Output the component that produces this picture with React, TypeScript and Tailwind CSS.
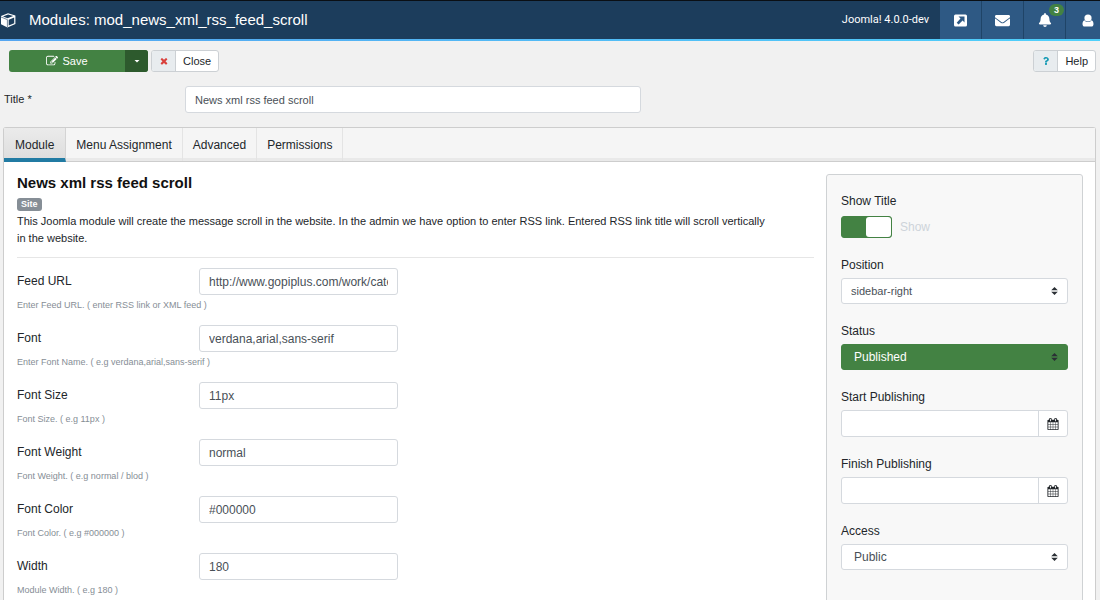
import React, { useState } from "react";
import { FaEnvelope, FaBell, FaQuestion } from "react-icons/fa";

type IconProps = { className?: string };

const CubeIcon = ({ className }: IconProps) => (
  <svg viewBox="0 0 16 16" className={className} aria-hidden="true">
    <path fill="currentColor" d="M8 1.2 15.4 3.6V12L7.4 15.4 1 12.2V4Z" />
    <path fill="#1c3d5c" d="M8.1 2.5 13.2 4.1 7.6 6.3 3 4.5Z" />
    <path fill="#1c3d5c" d="M8.7 7.7 14.2 5.4V11.3L8.7 13.6Z" />
    <path fill="none" stroke="#1c3d5c" strokeWidth="0.6" d="M1 5 7.4 7.6V15" />
  </svg>
);

const EditIcon = ({ className }: IconProps) => (
  <svg viewBox="0 0 1792 1792" fill="currentColor" className={className} aria-hidden="true">
    <path d="M888 1184l116-116-152-152-116 116v56h96v96h56zm440-720q-16-16-33 1l-350 350q-17 17-1 33t33-1l350-350q17-17 1-33zm80 594v190q0 119-84.5 203.5t-203.5 84.5h-832q-119 0-203.5-84.5t-84.5-203.5v-832q0-119 84.5-203.5t203.5-84.5h832q63 0 117 25 15 7 18 23 3 17-9 29l-49 49q-14 14-32 8-23-6-45-6h-832q-66 0-113 47t-47 113v832q0 66 47 113t113 47h832q66 0 113-47t47-113v-126q0-13 9-22l64-64q15-15 35-7t20 29zm-96-738l288 288-672 672h-288v-288zm444 132l-92 92-288-288 92-92q28-28 68-28t68 28l152 152q28 28 28 68t-28 68z" />
  </svg>
);

const CloseIcon = ({ className }: IconProps) => (
  <svg viewBox="0 0 1792 1792" fill="currentColor" className={className} aria-hidden="true">
    <path d="M1490 1322q0 40-28 68l-136 136q-28 28-68 28t-68-28l-294-294-294 294q-28 28-68 28t-68-28l-136-136q-28-28-28-68t28-68l294-294-294-294q-28-28-28-68t28-68l136-136q28-28 68-28t68 28l294 294 294-294q28-28 68-28t68 28l136 136q28 28 28 68t-28 68l-294 294 294 294q28 28 28 68z" />
  </svg>
);

const CalendarIcon = ({ className }: IconProps) => (
  <svg viewBox="0 0 1792 1792" fill="currentColor" className={className} aria-hidden="true">
    <path d="M192 1664h288v-288h-288v288zm352 0h320v-288h-320v288zm-352-352h288v-320h-288v320zm352 0h320v-320h-320v320zm-352-384h288v-288h-288v288zm736 736h320v-288h-320v288zm-384-736h320v-288h-320v288zm768 736h288v-288h-288v288zm-384-352h320v-320h-320v320zm-352-864v-288q0-13-9.5-22.5t-22.5-9.5h-64q-13 0-22.5 9.5t-9.5 22.5v288q0 13 9.5 22.5t22.5 9.5h64q13 0 22.5-9.5t9.5-22.5zm736 864h288v-320h-288v320zm-384-384h320v-288h-320v288zm384 0h288v-288h-288v288zm32-480v-288q0-13-9.5-22.5t-22.5-9.5h-64q-13 0-22.5 9.5t-9.5 22.5v288q0 13 9.5 22.5t22.5 9.5h64q13 0 22.5-9.5t9.5-22.5zm384-64v1280q0 52-38 90t-90 38h-1408q-52 0-90-38t-38-90v-1280q0-52 38-90t90-38h128v-96q0-66 47-113t113-47h64q66 0 113 47t47 113v96h384v-96q0-66 47-113t113-47h64q66 0 113 47t47 113v96h128q52 0 90 38t38 90z" />
  </svg>
);

const ExternalIcon = ({ className }: IconProps) => (
  <svg viewBox="0 0 13 13" className={className} aria-hidden="true">
    <rect width="13" height="12" y="0.5" rx="1.5" fill="currentColor" />
    <path d="M4.5 2.5H10.5V8.5L8.6 6.6 4.6 10.6 2.7 8.7 6.5 4.6Z" fill="#2e5984" />
  </svg>
);

const UserIcon = ({ className }: IconProps) => (
  <svg viewBox="0 0 12 13" fill="currentColor" className={className} aria-hidden="true">
    <circle cx="6" cy="4" r="3.6" />
    <path d="M2.6 6.2C1.2 6.4 0.5 8 0.5 10 0.5 11.6 1.3 12.6 2.8 12.6H9.2C10.7 12.6 11.5 11.6 11.5 10 11.5 8 10.8 6.4 9.4 6.2 8.5 7.6 7.3 8.1 6 8.1S3.5 7.6 2.6 6.2Z" />
  </svg>
);

const BellIcon = FaBell;

const SortIcon = ({ className }: IconProps) => (
  <svg viewBox="0 0 7 8" fill="currentColor" className={className} aria-hidden="true">
    <path d="M3.5 0 6.8 3.2H0.2ZM3.5 8 0.2 4.8H6.8Z" />
  </svg>
);

const tabs = ["Module", "Menu Assignment", "Advanced", "Permissions"];

const fields = [
  { id: "feed-url", label: "Feed URL", value: "http://www.gopiplus.com/work/category/joomla/feed/", hint: "Enter Feed URL. ( enter RSS link or XML feed )" },
  { id: "font", label: "Font", value: "verdana,arial,sans-serif", hint: "Enter Font Name. ( e.g verdana,arial,sans-serif )" },
  { id: "font-size", label: "Font Size", value: "11px", hint: "Font Size. ( e.g 11px )" },
  { id: "font-weight", label: "Font Weight", value: "normal", hint: "Font Weight. ( e.g normal / blod )" },
  { id: "font-color", label: "Font Color", value: "#000000", hint: "Font Color. ( e.g #000000 )" },
  { id: "width", label: "Width", value: "180", hint: "Module Width. ( e.g 180 )" },
];

const headerButton =
  "relative flex w-[42px] shrink-0 items-center justify-center border-r border-[#1f4467] bg-[#2e5984]";

function SelectField({ id, label, options, look }: { id: string; label: string; options: string[]; look: string }) {
  return (
    <div>
      <label htmlFor={id} className="block leading-4">{label}</label>
      <div className="relative mt-[5px]">
        <select id={id} className={"block h-[26px] w-full appearance-none rounded-[3px] border outline-none " + look}>
          {options.map((o) => (
            <option key={o}>{o}</option>
          ))}
        </select>
        <SortIcon className="pointer-events-none absolute top-[9px] right-[10px] h-2 w-[7px] text-[#2b3035]" />
      </div>
    </div>
  );
}

function DateField({ id, label }: { id: string; label: string }) {
  return (
    <div>
      <label htmlFor={id} className="block leading-4">{label}</label>
      <div className="mt-[5px] flex h-[27px] overflow-hidden rounded-[3px] border border-[#d5d9de] bg-white">
        <input id={id} type="text" className="min-w-0 flex-1 px-2 outline-none" />
        <button type="button" aria-label={label + " calendar"} className="flex w-[29px] items-center justify-center border-l border-[#d5d9de]">
          <CalendarIcon className="size-3 text-[#22262a]" />
        </button>
      </div>
    </div>
  );
}

export default function App() {
  const [active, setActive] = useState("Module");
  return (
    <div className="flex h-screen flex-col overflow-hidden bg-[#f1f1f1] font-['Liberation_Sans',Arial,sans-serif] text-xs text-[#22262a]">
      <header className="shrink-0 bg-linear-to-r from-[#55a5f0] to-[#4fd0fa] pb-[2px] text-white">
        <div className="flex h-[39px] border-t border-[#0a0f14] bg-[#1c3d5c]">
          <div className="flex flex-1 items-center gap-[13px]">
            <CubeIcon className="size-4" />
            <h1 className="text-[15px]">Modules: mod_news_xml_rss_feed_scroll</h1>
          </div>
          <span className="flex items-center pr-[11px] font-[Roboto,'Liberation_Sans',sans-serif] text-[11px]">Joomla! 4.0.0-dev</span>
          <nav className="flex">
            <button type="button" aria-label="Preview" className={headerButton}><ExternalIcon className="size-[13px]" /></button>
            <button type="button" aria-label="Messages" className={headerButton}><FaEnvelope className="size-[15px]" /></button>
            <button type="button" aria-label="Notifications" className={headerButton}>
              <BellIcon className="size-[14px]" />
              <span className="absolute top-[3px] right-[1px] rounded-full bg-[#438243] px-[5px] text-[9px] leading-3 font-bold">3</span>
            </button>
            <button type="button" aria-label="User" className="flex w-[34px] items-center justify-end bg-[#2e5984] pr-[6px]">
              <UserIcon className="h-[13px] w-3" />
            </button>
          </nav>
        </div>
      </header>

      <div className="flex shrink-0 items-center gap-[3px] pt-[9px] pr-1 pl-[9px] text-[11px]">
        <div className="flex h-[22px] overflow-hidden rounded-[3px] bg-[#438243] text-white">
          <button type="button" className="flex w-[116px] items-center justify-center gap-1"><EditIcon className="size-3" />Save</button>
          <button type="button" aria-label="More save options" className="flex w-[23px] items-center justify-center bg-[#2d5a2d]">
            <svg viewBox="0 0 6 3" className="h-[3px] w-[6px]" aria-hidden="true"><path d="M0.5 0H5.5L3 2.6Z" fill="currentColor" /></svg>
          </button>
        </div>
        <button type="button" className="flex h-[22px] items-stretch overflow-hidden rounded-[3px] border border-[#ccd0d4] bg-white">
          <span className="flex w-6 items-center justify-center border-r border-[#ccd0d4] bg-[#e8ecef]"><CloseIcon className="size-[10px] text-[#d9413d]" /></span>
          <span className="flex items-center px-[7px]">Close</span>
        </button>
        <button type="button" className="ml-auto flex h-[22px] items-stretch overflow-hidden rounded-[3px] border border-[#ccd0d4] bg-white">
          <span className="flex w-6 items-center justify-center border-r border-[#ccd0d4] bg-[#e8ecef]"><FaQuestion className="size-2 text-[#189bb5]" /></span>
          <span className="flex items-center px-[7px]">Help</span>
        </button>
      </div>

      <div className="mt-[14px] flex shrink-0 items-center pl-1">
        <label htmlFor="title" className="w-[181px] text-[11px]">Title *</label>
        <input id="title" defaultValue="News xml rss feed scroll" className="h-[27px] w-[456px] rounded-[3px] border border-[#d5d9de] bg-white px-[9px] text-[11px] text-[#495057] outline-none" />
      </div>

      <div className="mt-[14px] mr-1 ml-[3px] flex min-h-0 flex-1 flex-col rounded-t-[3px] border border-b-0 border-[#cdcdcd] bg-white">
        <div role="tablist" className="flex h-[34px] shrink-0 border-b border-[#cdcdcd] bg-[#f5f5f5] shadow-[inset_0_-3px_0_#e9e9e9]">
          {tabs.map((t) => (
            <button
              key={t}
              type="button"
              role="tab"
              aria-selected={t === active}
              onClick={() => setActive(t)}
              className={
                t === active
                  ? "h-[34px] border-r border-b-4 border-r-[#d4d4d4] border-b-[#217ba3] bg-linear-to-b from-[#ebebeb] to-[#dedede] px-[11px] pt-1"
                  : "border-r border-[#e4e4e4] px-[10px]"
              }
            >
              {t}
            </button>
          ))}
        </div>

        <div className="flex items-start gap-3 pt-3 pr-3 pl-[13px]">
          <main className="min-w-0 flex-1">
            <h2 className="text-[15px] leading-[18px] font-bold text-[#111]">News xml rss feed scroll</h2>
            <span className="mt-[6px] block w-fit rounded-[3px] bg-[#868e96] px-1 text-[9px] leading-[13px] font-bold text-white">Site</span>
            <p className="mt-[2px] text-[11px] leading-[17px]">
              This Joomla module will create the message scroll in the website. In the admin we have option to enter RSS link. Entered RSS link title will scroll vertically
              <br />
              in the website.
            </p>
            <hr className="mt-[10px] mb-[10px] border-[#e6e6e6]" />
            {fields.map((f) => (
              <div key={f.id} className="h-[57px]">
                <div className="flex">
                  <label htmlFor={f.id} className="w-[182px] pt-[5px] leading-4">{f.label}</label>
                  <input id={f.id} defaultValue={f.value} className="h-[27px] w-[199px] rounded-[3px] border border-[#d5d9de] bg-white px-[9px] text-[#495057] outline-none" />
                </div>
                <small className="mt-[3px] block text-[9px] leading-[14px] text-[#868e96]">{f.hint}</small>
              </div>
            ))}
          </main>

          <aside className="flex h-[500px] w-[257px] shrink-0 flex-col gap-[19px] rounded-[3px] border border-[#cfd2d4] bg-[#f8f8f8] px-[14px] pt-[18px]">
            <div>
              <span className="block leading-4">Show Title</span>
              <label className="mt-[7px] flex w-fit items-center gap-2">
                <input type="checkbox" aria-label="Show Title" defaultChecked className="peer sr-only" />
                <span className="flex h-[22px] w-[51px] justify-end rounded-[3px] border border-[#438243] bg-[#438243]">
                  <span className="w-[25px] rounded-[3px] bg-white" />
                </span>
                <span className="text-[#ced4da]">Show</span>
              </label>
            </div>
            <SelectField id="position" label="Position" options={["sidebar-right"]} look="border-[#d5d9de] bg-white px-[9px] text-[11px] text-[#495057]" />
            <SelectField id="status" label="Status" options={["Published", "Unpublished", "Trashed"]} look="border-[#438243] bg-[#438243] px-3 text-white" />
            <DateField id="start" label="Start Publishing" />
            <DateField id="finish" label="Finish Publishing" />
            <SelectField id="access" label="Access" options={["Public", "Registered", "Special"]} look="border-[#d5d9de] bg-white px-3 text-[#495057]" />
          </aside>
        </div>
      </div>
    </div>
  );
}
